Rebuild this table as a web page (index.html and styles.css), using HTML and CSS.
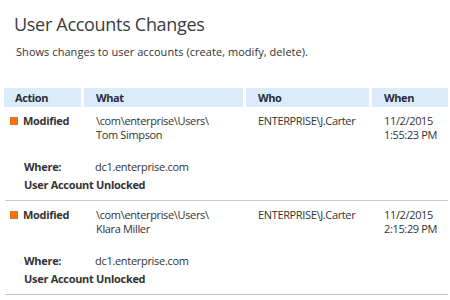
FILE: index.html
```html
<!DOCTYPE html>
<html>
<head>
<meta charset="utf-8">
<link rel="stylesheet" href="styles.css">
</head>
<body>
<div class="page">
  <h1 class="title">User Accounts Changes</h1>
  <p class="desc">Shows changes to user accounts (create, modify, delete).</p>
  <div class="table">
    <div class="head">
      <div class="hcell">Action</div>
      <div class="hcell">What</div>
      <div class="hcell">Who</div>
      <div class="hcell">When</div>
    </div>
    <div class="row">
      <div class="main">
        <div class="cell action"><span class="mark"></span>Modified</div>
        <div class="cell what">\com\enterprise\Users\<br>Tom Simpson</div>
        <div class="cell who">ENTERPRISE\J.Carter</div>
        <div class="cell when">11/2/2015<br>1:55:23 PM</div>
      </div>
      <div class="detail">
        <div class="where"><span class="label">Where:</span><span class="value">dc1.enterprise.com</span></div>
        <div class="label">User Account Unlocked</div>
      </div>
    </div>
    <div class="row">
      <div class="main">
        <div class="cell action"><span class="mark"></span>Modified</div>
        <div class="cell what">\com\enterprise\Users\<br>Klara Miller</div>
        <div class="cell who">ENTERPRISE\J.Carter</div>
        <div class="cell when">11/2/2015<br>2:15:29 PM</div>
      </div>
      <div class="detail">
        <div class="where"><span class="label">Where:</span><span class="value">dc1.enterprise.com</span></div>
        <div class="label">User Account Unlocked</div>
      </div>
    </div>
  </div>
</div>
</body>
</html>
```

FILE: styles.css
```css
html, body {
  margin: 0;
  padding: 0;
  background: #ffffff;
}
body {
  font-family: "Open Sans", "Noto Sans", sans-serif;
  color: #333333;
  width: 450px;
  height: 300px;
  overflow: hidden;
}
.page {
  padding-top: 11px;
}
.title {
  margin: 0 0 0 14px;
  font-size: 18px;
  font-weight: 400;
  line-height: 26px;
  color: #3c3c3c;
  letter-spacing: -0.3px;
}
.desc {
  margin: 8px 0 0 16px;
  font-size: 11px;
  line-height: 14px;
  color: #333333;
  letter-spacing: 0.05px;
}
.table {
  margin: 29px 2px 0 4px;
}
.head {
  display: grid;
  grid-template-columns: 77px 159px 123px 76px;
  column-gap: 3px;
}
.hcell {
  background: #dcebf9;
  height: 19px;
  line-height: 19px;
  padding-left: 12px;
  font-size: 11px;
  font-weight: 700;
  color: #2b2b3b;
  letter-spacing: -0.4px;
}
.hcell:first-child {
  padding-left: 11px;
}
.row {
  margin-left: 1px;
  border-bottom: 1px solid #c8c8c8;
  padding: 7px 0 6px;
}
.main {
  display: grid;
  grid-template-columns: 76px 159px 123px 76px;
  column-gap: 3px;
  font-size: 11px;
  line-height: 14px;
  letter-spacing: -0.35px;
}
.cell {
  padding-left: 12px;
}
.action {
  padding-left: 5px;
  display: flex;
  align-items: flex-start;
  font-weight: 700;
  font-size: 11px;
  letter-spacing: -0.3px;
}
.mark {
  width: 8px;
  height: 8px;
  background: #ee7318;
  margin: 3px 5px 0 0;
  flex: none;
}
.detail {
  margin-top: 16px;
  padding-left: 19px;
  font-size: 11px;
  line-height: 18px;
  letter-spacing: -0.3px;
}
.where {
  display: flex;
}
.label {
  font-weight: 700;
}
.where .label {
  width: 71px;
}
```
